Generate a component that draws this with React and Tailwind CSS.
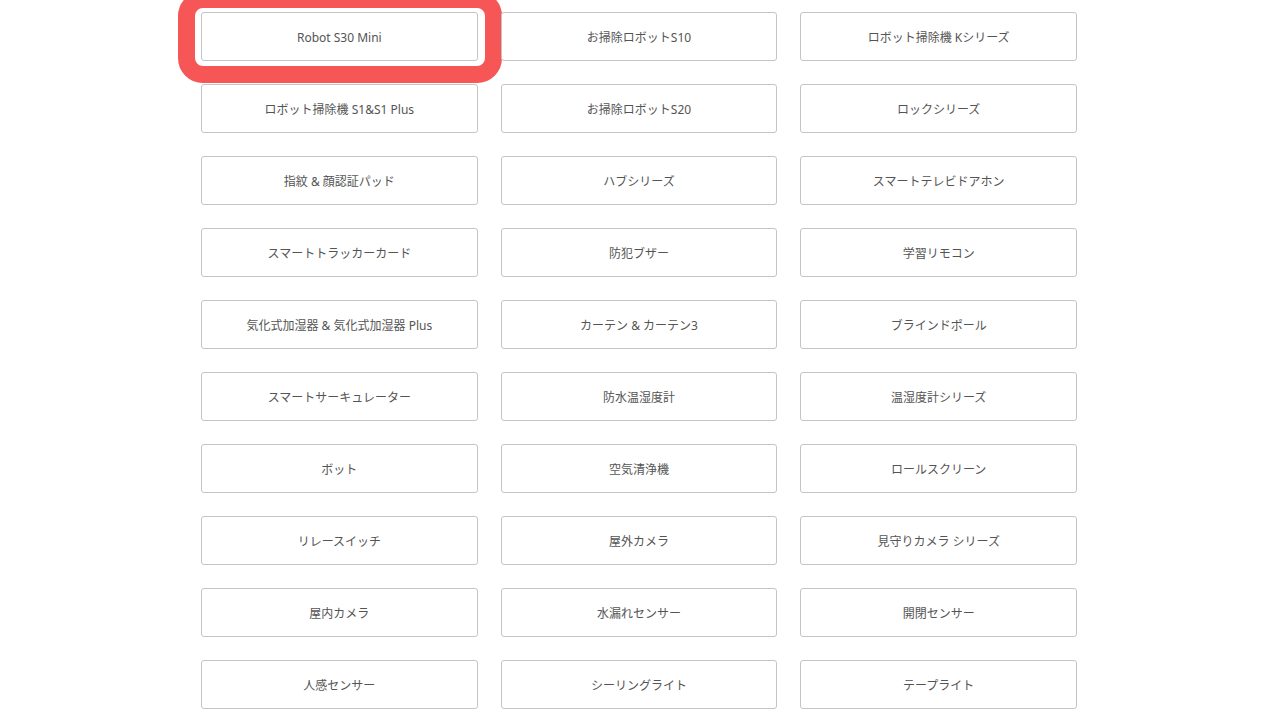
const items = [
  "Robot S30 Mini",
  "お掃除ロボットS10",
  "ロボット掃除機 Kシリーズ",
  "ロボット掃除機 S1&S1 Plus",
  "お掃除ロボットS20",
  "ロックシリーズ",
  "指紋 & 顔認証パッド",
  "ハブシリーズ",
  "スマートテレビドアホン",
  "スマートトラッカーカード",
  "防犯ブザー",
  "学習リモコン",
  "気化式加湿器 & 気化式加湿器 Plus",
  "カーテン & カーテン3",
  "ブラインドポール",
  "スマートサーキュレーター",
  "防水温湿度計",
  "温湿度計シリーズ",
  "ボット",
  "空気清浄機",
  "ロールスクリーン",
  "リレースイッチ",
  "屋外カメラ",
  "見守りカメラ シリーズ",
  "屋内カメラ",
  "水漏れセンサー",
  "開閉センサー",
  "人感センサー",
  "シーリングライト",
  "テープライト",
];

export default function App() {
  return (
    <div
      className="w-[1280px] h-[720px] overflow-hidden bg-white"
      style={{ fontFamily: '"Noto Sans", "Noto Sans CJK JP", sans-serif' }}
    >
      <div className="ml-[201px] mt-[12px] w-[876px] grid grid-cols-3 gap-x-[23px] gap-y-[23px]">
        {items.map((label, i) => (
          <div key={label} className="relative">
            <button className="w-full h-[49px] pt-[2px] border border-[#c4c4c4] rounded-[3px] bg-white text-[12px] text-[#545454] flex items-center justify-center">
              {label}
            </button>
            {/* highlight around the first item */}
            {i === 0 && (
              <div className="absolute left-[-23px] top-[-21px] w-[324px] h-[92px] border-[17px] border-[#f65656] rounded-[25px] pointer-events-none" />
            )}
          </div>
        ))}
      </div>
    </div>
  );
}
